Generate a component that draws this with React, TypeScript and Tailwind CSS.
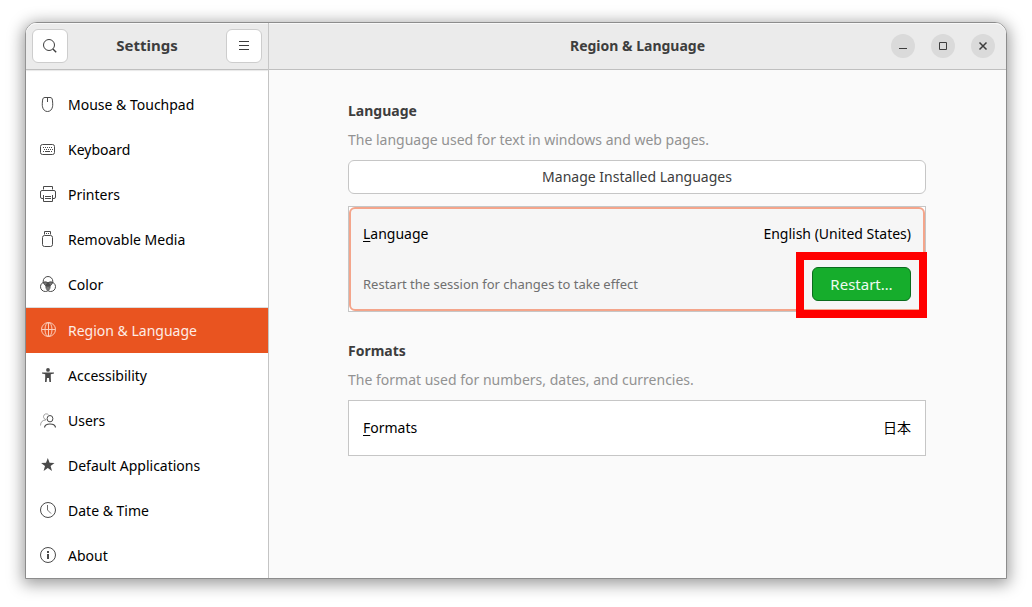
import type { ReactNode } from 'react';

function Icon({ children }: { children: ReactNode }) {
  return (
    <svg
      aria-hidden="true"
      className="size-4 shrink-0"
      viewBox="0 0 16 16"
      fill="none"
      stroke="currentColor"
      strokeWidth="1"
    >
      {children}
    </svg>
  );
}

const SearchIcon = () => (
  <Icon>
    <circle cx="7" cy="7" r="5.500" />
    <path d="M10.900 11l3.300 3.200" strokeWidth="1.400" />
  </Icon>
);

const MenuIcon = () => (
  <Icon>
    <path d="M3 3.500h10M3 7.500h10M3 11.500h10" />
  </Icon>
);

const MouseIcon = () => (
  <Icon>
    <path d="M5 1.500h5c1.700 0 2.300 1 2.400 2.600.3 2.800.5 4.800.1 6.700-.6 2.900-2.400 4.700-5 4.700s-4.400-1.800-5-4.700c-.4-1.900-.2-3.900.1-6.700C2.700 2.500 3.300 1.500 5 1.500zM7.500 1.500v4.500" />
  </Icon>
);

const KeyboardIcon = () => (
  <Icon>
    <rect x=".5" y="3.500" width="14" height="10" rx="2" />
    <path d="M3 6.500h10M4 8.500h9" strokeDasharray="1 1" />
    <path d="M3 10.500h1M5 10.500h5M11 10.500h1" />
  </Icon>
);

const PrinterIcon = () => (
  <Icon>
    <path d="M3.500 3.500v-3h9v3" />
    <path d="M3 12.500H2A1.500 1.500 0 0 1 .5 11V6A1.500 1.500 0 0 1 2 4.500h12A1.500 1.500 0 0 1 15.500 6v5a1.500 1.500 0 0 1-1.500 1.500h-1" />
    <path d="M3.500 9v6.500h9V9M5 10.500h6M5 12.500h6" />
  </Icon>
);

const UsbIcon = () => (
  <Icon>
    <path d="M4.500 3.500v-3h6v3" />
    <path d="M6 2.500h1M8 2.500h1" />
    <rect x="2.500" y="4.500" width="10" height="11" rx="2" />
  </Icon>
);

const ColorIcon = () => (
  <Icon>
    <path
      d="M3.400 6a4.800 4.800 0 0 1 4.600.6A4.800 4.800 0 0 1 12.600 6a4.800 4.800 0 0 1-2.500 3.800A4.800 4.800 0 0 1 8 14.400a4.800 4.800 0 0 1-2.100-4.600A4.800 4.800 0 0 1 3.400 6z"
      fill="currentColor"
      stroke="none"
      opacity=".75"
    />
    <path d="M8 6.600a4.800 4.800 0 0 1 2.100 3.200 4.800 4.800 0 0 1-4.200 0A4.800 4.800 0 0 1 8 6.600z" fill="currentColor" stroke="none" />
    <circle cx="8" cy="5.300" r="4.800" />
    <circle cx="5.300" cy="10.700" r="4.800" />
    <circle cx="10.700" cy="10.700" r="4.800" />
  </Icon>
);

const GlobeIcon = () => (
  <Icon>
    <circle cx="8.500" cy="7.500" r="7" />
    <ellipse cx="8.500" cy="7.500" rx="3.500" ry="7" />
    <path d="M1.500 7.500h14M8.500.5v14" />
  </Icon>
);

const AccessibilityIcon = () => (
  <Icon>
    <g fill="currentColor" stroke="none">
      <circle cx="8" cy="2.900" r="1.900" />
      <path d="M2 5.500h12v1l-3.200.8v3.200l.2 4.500H9.400L9 11H7l-.4 4H5l.2-4.500V7.300L2 6.500z" />
    </g>
  </Icon>
);

const UsersIcon = () => (
  <Icon>
    <g opacity=".5">
      <path d="M8.600 2.900A2.900 3 0 0 0 3.500 4.500c0 1.700 1.200 3.100 2.800 3.100M.5 13.500c.1-3.500 1.800-5.300 5.300-5.500" />
    </g>
    <ellipse cx="10" cy="6.700" rx="2.900" ry="3.200" />
    <path d="M4.500 15.500c.3-2.500 2.200-3.500 5.500-3.500s5.200 1 5.500 3.500" strokeWidth="1.200" />
  </Icon>
);

const StarIcon = () => (
  <Icon>
    <path
      d="M7.800 1l1.800 4.700 4.900.2-3.900 3.100 1.400 4.900-4.200-2.800-4.200 2.800L5 9 1.100 5.900l4.900-.2z"
      fill="currentColor"
      stroke="none"
    />
  </Icon>
);

const ClockIcon = () => (
  <Icon>
    <circle cx="8" cy="8" r="7.500" />
    <path d="M7.500 3v5l3.500 3.500" opacity=".8" />
  </Icon>
);

const InfoIcon = () => (
  <Icon>
    <circle cx="8" cy="8" r="7.500" />
    <path d="M7 4h2v2H7zM7 7h2v5H7z" fill="currentColor" stroke="none" />
  </Icon>
);

const sections = [
  { label: 'Mouse & Touchpad', icon: <MouseIcon /> },
  { label: 'Keyboard', icon: <KeyboardIcon /> },
  { label: 'Printers', icon: <PrinterIcon /> },
  { label: 'Removable Media', icon: <UsbIcon /> },
  { label: 'Color', icon: <ColorIcon /> },
  { label: 'Region & Language', icon: <GlobeIcon />, current: true },
  { label: 'Accessibility', icon: <AccessibilityIcon /> },
  { label: 'Users', icon: <UsersIcon /> },
  { label: 'Default Applications', icon: <StarIcon /> },
  { label: 'Date & Time', icon: <ClockIcon /> },
  { label: 'About', icon: <InfoIcon /> },
];

const headerButton =
  'flex h-[34px] w-9 items-center justify-center rounded-md border border-[#cdcdcd] bg-white text-[#3d3d3d]';
const windowButton = 'flex size-6 items-center justify-center rounded-full bg-[#dadada] text-[#3d3d3d]';

function Sidebar() {
  return (
    <aside className="flex w-[243px] shrink-0 flex-col rounded-tl-[11px] border-r border-[#c4c4c4] bg-white">
      <header className="flex h-[47px] items-center justify-between rounded-tl-[11px] border-b border-[#bfbfbf] bg-[#ebebeb] px-1.5 shadow-[inset_0_1px_0_#f8f8f8,0_1px_1px_#e8e8e8]">
        <button type="button" aria-label="Search" className={headerButton}>
          <SearchIcon />
        </button>
        <h1 className="pb-0.5 text-[15px] font-bold text-[#3d3d3d]">Settings</h1>
        <button type="button" aria-label="Menu" className={headerButton}>
          <MenuIcon />
        </button>
      </header>
      <nav className="pt-3">
        {sections.map(({ label, icon, current }) => (
          <a
            key={label}
            href="#"
            aria-current={current ? 'page' : undefined}
            className={
              current
                ? 'flex h-[46px] items-center gap-3 border-t border-[#dcdcdc] bg-[#e95420] bg-clip-padding px-3.5 pb-px text-[#fbcdbb]'
                : 'flex h-[45px] items-center gap-3 px-3.5 pb-px text-[#4a4a4a]'
            }
          >
            {icon}
            <span className={current ? 'pt-0.5 text-[#fdece6]' : 'pt-0.5 text-black'}>{label}</span>
          </a>
        ))}
      </nav>
    </aside>
  );
}

export default function App() {
  return (
    <div className="flex min-h-screen flex-col bg-white px-[25px] pt-[22px] pb-7 font-['Noto_Sans','Noto_Sans_CJK_JP',sans-serif] text-sm leading-5">
      <div className="flex grow rounded-t-xl border border-[#8c8c8c] bg-[#fafafa] shadow-[0_3px_16px_2px_rgba(0,0,0,0.4)]">
        <Sidebar />
        <div className="flex min-w-0 grow flex-col">
          <header className="grid h-[47px] grid-cols-[1fr_auto_1fr] items-center rounded-tr-[11px] border-b border-[#bfbfbf] bg-[#ebebeb] px-[11px] shadow-[inset_0_1px_0_#f8f8f8]">
            <h2 className="col-start-2 font-bold text-[#3d3d3d]">Region &amp; Language</h2>
            <div className="flex justify-end gap-4">
              <button type="button" aria-label="Minimize" className={windowButton}>
                <Icon>
                  <path d="M4 10.500h8" />
                </Icon>
              </button>
              <button type="button" aria-label="Maximize" className={windowButton}>
                <Icon>
                  <path d="M4.500 4.500h7v7h-7z" />
                </Icon>
              </button>
              <button type="button" aria-label="Close" className={windowButton}>
                <Icon>
                  <path d="M4.500 4.500l7 7M11.500 4.500l-7 7" strokeWidth="1.500" />
                </Icon>
              </button>
            </div>
          </header>

          <div className="pr-px">
            <main className="mx-auto w-full max-w-[578px] pt-[31px]">
              <section>
                <h3 className="font-bold text-[#3d3d3d]">Language</h3>
                <p className="mt-[9px] text-[#929292]">The language used for text in windows and web pages.</p>
                <button
                  type="button"
                  className="mt-2.5 h-[34px] w-full rounded-md border border-[#c6c6c6] bg-white text-[#3d3d3d]"
                >
                  Manage Installed Languages
                </button>
                <div className="mt-3 border border-[#c6c6c6] bg-white">
                  <div className="rounded-md border-2 border-[#f4a58b] bg-[#f6f6f6] px-3">
                    <button type="button" className="flex h-[50px] w-full items-center justify-between text-black">
                      <span>
                        <u className="underline-offset-2">L</u>anguage
                      </span>
                      <span>English (United States)</span>
                    </button>
                    <div className="flex h-[50px] items-center justify-between">
                      <p className="text-[13px] text-[#707070]">Restart the session for changes to take effect</p>
                      <div className="relative">
                        <button
                          type="button"
                          className="block h-[34px] w-[99px] rounded-md border border-[#0b6b1d] bg-[#16ad2c] text-[15px] text-[#eefbf0]"
                        >
                          Restart…
                        </button>
                        <div className="pointer-events-none absolute -inset-x-4 -top-[15px] -bottom-[17px] border-8 border-[#ff0000]" />
                      </div>
                    </div>
                  </div>
                </div>
              </section>

              <section className="mt-[29px]">
                <h3 className="font-bold text-[#3d3d3d]">Formats</h3>
                <p className="mt-[9px] text-[#929292]">The format used for numbers, dates, and currencies.</p>
                <button
                  type="button"
                  className="mt-2.5 flex h-14 w-full items-center justify-between border border-[#c6c6c6] bg-white px-3.5 text-black"
                >
                  <span>
                    <u className="underline-offset-2">F</u>ormats
                  </span>
                  <span lang="ja">日本</span>
                </button>
              </section>
            </main>
          </div>
        </div>
      </div>
    </div>
  );
}
